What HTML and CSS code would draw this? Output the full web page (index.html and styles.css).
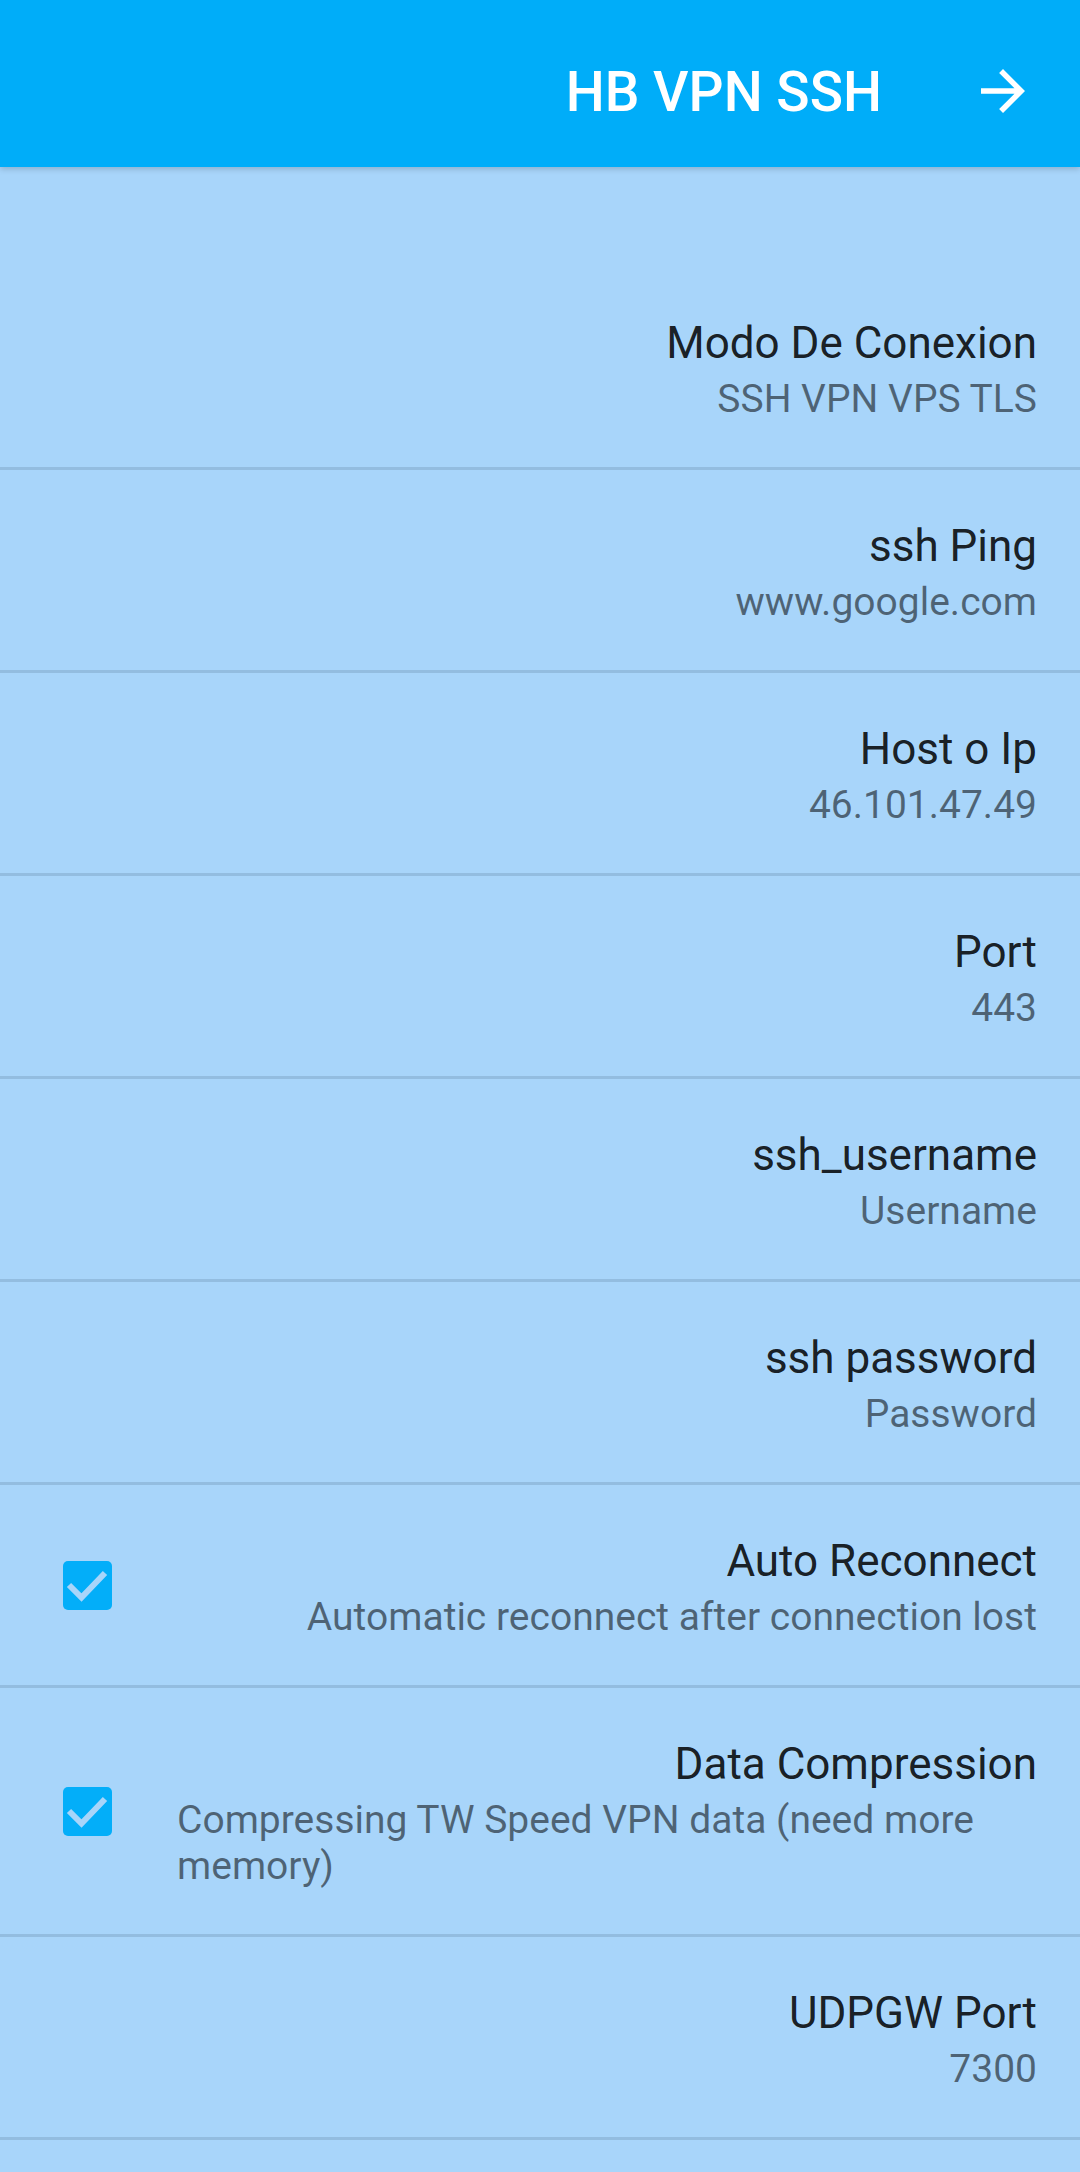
FILE: index.html
```html
<!DOCTYPE html>
<html>
<head>
  <title>HB VPN SSH</title>
  <link rel="stylesheet" href="styles.css">
</head>
<body>
  <header class="toolbar">
    <h1 class="toolbar-title">HB VPN SSH</h1>
    <button class="toolbar-action" aria-label="Next">
      <svg width="66" height="66" viewBox="0 0 24 24"><path d="M12 4l-1.41 1.41L16.17 11H4v2h12.17l-5.58 5.59L12 20l8-8z" fill="#ffffff"/></svg>
    </button>
  </header>

  <main class="prefs">
    <div class="category"></div>

    <div class="pref">
      <div class="pref-text">
        <div class="pref-title">Modo De Conexion</div>
        <div class="pref-summary">SSH VPN VPS TLS</div>
      </div>
    </div>

    <div class="pref">
      <div class="pref-text">
        <div class="pref-title">ssh Ping</div>
        <div class="pref-summary">www.google.com</div>
      </div>
    </div>

    <div class="pref">
      <div class="pref-text">
        <div class="pref-title">Host o Ip</div>
        <div class="pref-summary">46.101.47.49</div>
      </div>
    </div>

    <div class="pref">
      <div class="pref-text">
        <div class="pref-title">Port</div>
        <div class="pref-summary">443</div>
      </div>
    </div>

    <div class="pref">
      <div class="pref-text">
        <div class="pref-title">ssh_username</div>
        <div class="pref-summary">Username</div>
      </div>
    </div>

    <div class="pref">
      <div class="pref-text">
        <div class="pref-title">ssh password</div>
        <div class="pref-summary">Password</div>
      </div>
    </div>

    <div class="pref pref-check">
      <div class="checkbox">
        <svg width="49" height="49" viewBox="0 0 49 49"><rect width="49" height="49" rx="5" fill="#03aef9"/><polyline points="6,24 18.5,36.5 42,12" fill="none" stroke="#a8d5fa" stroke-width="6"/></svg>
      </div>
      <div class="pref-text">
        <div class="pref-title">Auto Reconnect</div>
        <div class="pref-summary">Automatic reconnect after connection lost</div>
      </div>
    </div>

    <div class="pref pref-check">
      <div class="checkbox">
        <svg width="49" height="49" viewBox="0 0 49 49"><rect width="49" height="49" rx="5" fill="#03aef9"/><polyline points="6,24 18.5,36.5 42,12" fill="none" stroke="#a8d5fa" stroke-width="6"/></svg>
      </div>
      <div class="pref-text">
        <div class="pref-title">Data Compression</div>
        <div class="pref-summary">Compressing TW Speed VPN data (need more memory)</div>
      </div>
    </div>

    <div class="pref">
      <div class="pref-text">
        <div class="pref-title">UDPGW Port</div>
        <div class="pref-summary">7300</div>
      </div>
    </div>
  </main>
</body>
</html>
```

FILE: styles.css
```css
* {
  margin: 0;
  padding: 0;
  box-sizing: border-box;
}
html,
body {
  height: 100%;
  background: #a8d5fa;
  font-family: Roboto, "Noto Sans", sans-serif;
}
.toolbar {
  position: relative;
  z-index: 1;
  height: 167px;
  padding: 18px 44px 0 0;
  display: flex;
  align-items: center;
  justify-content: flex-end;
  background: #00adf9;
  box-shadow: 0 2px 6px rgba(0, 0, 0, 0.18);
}
.toolbar-title {
  margin-right: 88px;
  font-size: 55px;
  line-height: 55px;
  font-weight: 500;
  color: #ffffff;
}
.toolbar-action {
  width: 66px;
  height: 66px;
  margin-top: -4px;
  border: none;
  background: transparent;
  display: flex;
}
.category {
  height: 100px;
}
.pref {
  min-height: 203px;
  padding: 0 43px 0 177px;
  display: flex;
  align-items: center;
  justify-content: flex-end;
  border-bottom: 3px solid #93bde0;
}
.pref-check {
  padding-left: 63px;
}
.checkbox {
  width: 49px;
  height: 49px;
  margin-right: 65px;
  display: flex;
}
.pref-text {
  flex: 1;
  padding: 49px 0 45px;
  display: flex;
  flex-direction: column;
  align-items: flex-end;
}
.pref-title {
  font-size: 44px;
  line-height: 54px;
  color: rgba(0, 0, 0, 0.87);
}
.pref-summary {
  margin-top: 6px;
  font-size: 39px;
  line-height: 46px;
  color: rgba(0, 0, 0, 0.54);
}
```
